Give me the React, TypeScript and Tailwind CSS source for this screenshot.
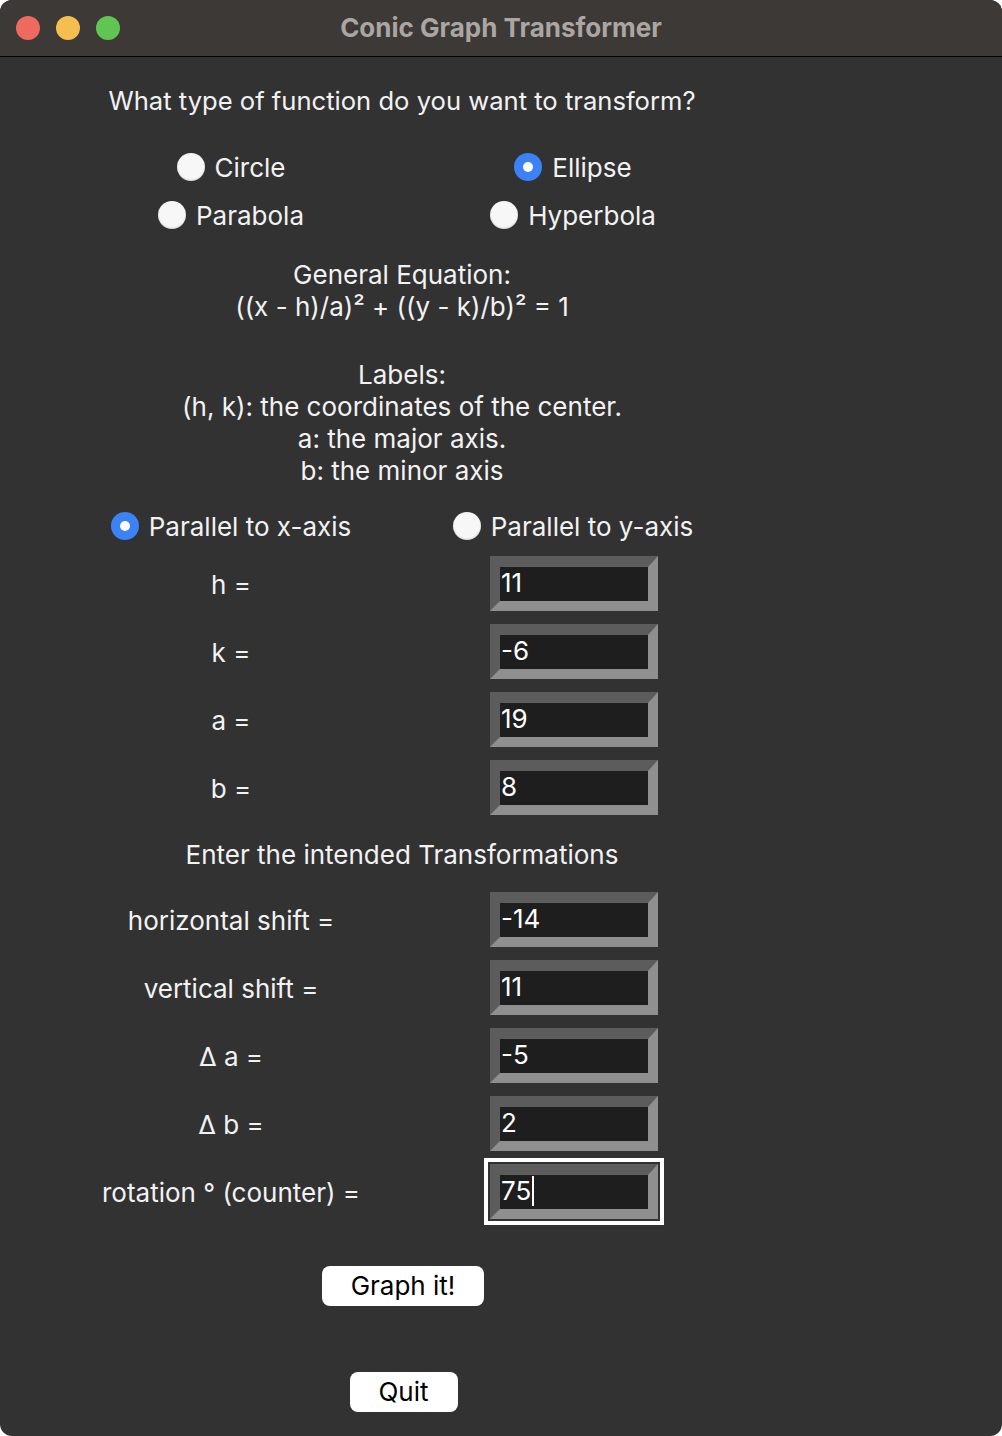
import React from 'react';

type RadioProps = { label: string; checked?: boolean };

function Radio({ label, checked = false }: RadioProps) {
  return (
    <div className="flex items-center gap-[10px]">
      {checked ? (
        <span className="flex h-[28px] w-[28px] items-center justify-center rounded-full bg-[#3b82f6]">
          <span className="h-[10px] w-[10px] rounded-full bg-white" />
        </span>
      ) : (
        <span className="h-[28px] w-[28px] rounded-full bg-[#f7f7f7] shadow-[inset_0_-1px_2px_rgba(0,0,0,0.15)]" />
      )}
      <span>{label}</span>
    </div>
  );
}

function Entry({ value, focused = false }: { value: string; focused?: boolean }) {
  return (
    <div
      className={`ml-[2px] h-[67px] w-[180px] p-[2px] ${
        focused ? 'border-[4px] border-white' : 'border-[4px] border-transparent'
      }`}
    >
      <div className="h-[55px] w-[168px] border-[10px] border-t-[11px] border-t-[#5c5c5c] border-l-[#5c5c5c] border-b-[#8f8f8f] border-r-[#8f8f8f] bg-[#1e1e1e]">
        <div className="flex h-full items-center pl-[1px] pb-[1px] text-[26px] leading-none text-white">
          <span>{value}</span>
          {focused && <span className="ml-[1px] h-[30px] w-[2px] bg-white" />}
        </div>
      </div>
    </div>
  );
}

function FieldRow({ label, value, focused }: { label: string; value: string; focused?: boolean }) {
  return (
    <div className="grid h-[68px] grid-cols-2 items-center">
      <div className="pt-[3px] text-center">{label}</div>
      <div className="flex justify-center">
        <Entry value={value} focused={focused} />
      </div>
    </div>
  );
}

export default function App() {
  return (
    <div className="min-h-screen bg-white">
      <div className="flex h-[1436px] w-[1002px] flex-col overflow-hidden rounded-[12px] bg-[#323232] font-['Inter','Noto_Sans',sans-serif]">
        {/* title bar */}
        <div className="relative flex h-[57px] shrink-0 items-center justify-center border-b border-black bg-[#3c3936] pb-[2px]">
          <div className="absolute left-[16px] top-[16px] flex gap-[16px]">
            <span className="h-[24px] w-[24px] rounded-full bg-[#ed6a5e]" />
            <span className="h-[24px] w-[24px] rounded-full bg-[#f5bf4f]" />
            <span className="h-[24px] w-[24px] rounded-full bg-[#61c554]" />
          </div>
          <span className="text-[26px] font-bold text-[#aba6a3]">Conic Graph Transformer</span>
        </div>

        <div className="ml-[60px] flex w-[684px] flex-col text-[26px] text-[#f2f2f2]">
          <div className="mt-[23px] flex h-[42px] items-center justify-center text-[25.6px]">
            What type of function do you want to transform?
          </div>

          <div className="mt-[21px] grid h-[48px] grid-cols-2 items-center">
            <div className="flex justify-center">
              <Radio label="Circle" />
            </div>
            <div className="flex justify-center">
              <Radio label="Ellipse" checked />
            </div>
          </div>
          <div className="grid h-[48px] grid-cols-2 items-center">
            <div className="flex justify-center">
              <Radio label="Parabola" />
            </div>
            <div className="flex justify-center">
              <Radio label="Hyperbola" />
            </div>
          </div>

          <div className="mt-[20px] text-center leading-[32px]">
            <div>General Equation:</div>
            <div>((x - h)/a)² + ((y - k)/b)² = 1</div>
          </div>

          <div className="mt-[36px] text-center leading-[32px]">
            <div>Labels:</div>
            <div>(h, k): the coordinates of the center.</div>
            <div>a: the major axis.</div>
            <div>b: the minor axis</div>
          </div>

          <div className="mt-[16px] grid h-[46px] grid-cols-2 items-center">
            <div className="flex justify-center">
              <Radio label="Parallel to x-axis" checked />
            </div>
            <div className="flex justify-center">
              <Radio label="Parallel to y-axis" />
            </div>
          </div>

          <FieldRow label="h =" value="11" />
          <FieldRow label="k =" value="-6" />
          <FieldRow label="a =" value="19" />
          <FieldRow label="b =" value="8" />

          <div className="flex h-[64px] items-center justify-center pt-[2px]">
            Enter the intended Transformations
          </div>

          <FieldRow label="horizontal shift =" value="-14" />
          <FieldRow label="vertical shift =" value="11" />
          <FieldRow label="Δ a =" value="-5" />
          <FieldRow label="Δ b =" value="2" />
          <FieldRow label="rotation ° (counter) =" value="75" focused />

          <div className="mt-[41px] flex justify-center">
            <button className="ml-[2px] h-[40px] w-[162px] rounded-[8px] bg-white pb-[2px] text-[26px] text-black">
              Graph it!
            </button>
          </div>
          <div className="mt-[66px] flex justify-center">
            <button className="ml-[3px] h-[40px] w-[108px] rounded-[8px] bg-white pb-[2px] text-[26px] text-black">
              Quit
            </button>
          </div>
        </div>
      </div>
    </div>
  );
}
